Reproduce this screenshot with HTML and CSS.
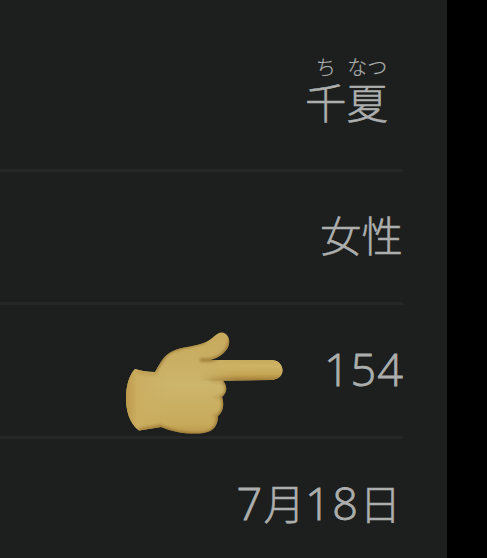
FILE: index.html
```html
<!DOCTYPE html>
<html lang="ja">
<head>
<meta charset="utf-8">
<title>プロフィール</title>
<link rel="stylesheet" href="styles.css">
</head>
<body>
<main class="profile">
  <section class="row row-name">
    <div class="name"><span class="char"><span class="reading">ち</span><span>千</span></span><span class="char"><span class="reading">なつ</span><span>夏</span></span></div>
  </section>
  <section class="row"><div class="value">女性</div></section>
  <section class="row row-height">
    <svg class="hand" viewBox="0 0 190 130" aria-hidden="true">
      <defs>
        <linearGradient id="skin" x1="0" y1="0" x2="0" y2="1">
          <stop offset="0" stop-color="#c5a657"/>
          <stop offset=".5" stop-color="#ccb56c"/>
          <stop offset=".8" stop-color="#c8aa5b"/>
          <stop offset="1" stop-color="#a47e36"/>
        </linearGradient>
        <linearGradient id="finger" x1="0" y1="0" x2="0" y2="1">
          <stop offset="0" stop-color="#c7aa5c"/>
          <stop offset=".3" stop-color="#ceb365"/>
          <stop offset=".7" stop-color="#c5a655"/>
          <stop offset="1" stop-color="#a17c35"/>
        </linearGradient>
        <linearGradient id="fade" x1="0" y1="0" x2="1" y2="0">
          <stop offset=".2" stop-color="#000"/>
          <stop offset=".5" stop-color="#fff"/>
        </linearGradient>
        <mask id="fingerFade"><rect x="65" y="35" width="120" height="30" fill="url(#fade)"/></mask>
        <linearGradient id="wrist" x1="0" y1="0" x2="1" y2="0">
          <stop offset="0" stop-color="#bd994c"/>
          <stop offset=".25" stop-color="#cbae60"/>
          <stop offset="1" stop-color="#ccb064" stop-opacity="0"/>
        </linearGradient>
        <filter id="soft" x="-20%" y="-20%" width="140%" height="140%"><feGaussianBlur stdDeviation="1.7"/></filter>
        <clipPath id="outline"><path d="M25 49C31 51 38 52 45 52C50 44 53 36 61 32C72 26 86 27 96 22C104 18 107 12 112 12.500C117 13 120 18 119 24C118 31 109 38 100 40L161 40C168 40 172 44 172.500 50C172.500 56 168 59.500 161 60L113 60.700C117 65 118 72 112 77C114 83 114 91 108 96C108 107 102 113 89 113.500C75 114 63 112 51 107L29 110.500C19 103 16 90 16 78C16 66 19 55 25 49Z"/></clipPath>
      </defs>
      <g clip-path="url(#outline)">
        <rect width="190" height="130" fill="url(#skin)"/>
        <rect x="65" y="40" width="110" height="20.500" fill="url(#finger)" mask="url(#fingerFade)"/>
        <path d="M16 45H60V112H16Z" fill="url(#wrist)"/>
        <path class="shade" d="M45 51C50 43 53 35 61 31C72 25 86 26 96 21M90 40L101 40C112 37 119 29 120 20M113 61C118 66 118 73 112 77C115 85 114 91 108 96C108 107 102 114 89 114C75 115 63 112 51 107L29 111"/>
        <path class="crease" d="M27 51Q39 55 47 53M29 109Q42 107 51 105M101 61Q109 61 112 61M104 78L112 77M102 96H108"/>
      </g>
    </svg>
    <div class="value digits">154</div>
  </section>
  <section class="row row-date"><div class="value"><span class="digits">7</span>月<span class="digits">18</span>日</div></section>
</main>
</body>
</html>
```
FILE: styles.css
```css
* { box-sizing: border-box; }
body { margin: 0; background: #000; }
.profile {
  width: 447px;
  height: 558px;
  padding: 38px 44px 0 0;
  background: #1c1f1e;
  overflow: hidden;
  color: #adafae;
  font-family: "Noto Sans CJK JP", sans-serif;
  font-weight: 300;
  font-size: 41.5px;
  line-height: 60px;
  -webkit-text-stroke: 0.5px #adafae;
}
.row {
  display: flex;
  justify-content: flex-end;
  align-items: center;
  height: 133.5px;
  border-bottom: 3px solid #242726;
  white-space: nowrap;
}
.row .value { padding: 0 0 6px; }
.row-height .value { padding: 0 0 2px; }
.row-date { border-bottom: 0; }
.row-date .value { padding: 0 2px 5px 0; }
.name { display: flex; padding: 0 15px 0 0; margin-top: -28px; }
.char {
  display: flex;
  flex-direction: column;
  align-items: center;
  line-height: 46px;
}
.reading { font-size: 20px; line-height: 23px; -webkit-text-stroke-width: 0.2px; }
.digits {
  font-family: "Open Sans", sans-serif;
  font-size: 45px;
  letter-spacing: 1px;
  -webkit-text-stroke-width: 0.8px;
}
.row-date .digits { letter-spacing: 1.5px; }
.row-height .digits { margin-right: -1px; }
.hand { width: 190px; height: 130px; flex: none; margin: 30px 24px 0 0; }
.shade { fill: none; stroke: #987431; stroke-width: 3; filter: url(#soft); }
.crease { fill: none; stroke: #a78038; stroke-width: 2; opacity: .5; filter: url(#soft); }
```
